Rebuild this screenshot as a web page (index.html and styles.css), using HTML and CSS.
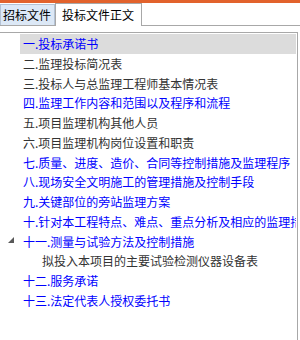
FILE: index.html
```html
<!DOCTYPE html>
<html lang="zh-CN">

<head>
    <meta charset="UTF-8">
    <meta name="viewport" content="width=device-width, initial-scale=1.0">
    <title>投标文件</title>
    <link rel="stylesheet" href="styles.css">
</head>

<body>

    <div class="tabs">
        <span class="tab">招标文件</span>
        <span class="tab active">投标文件正文</span>
    </div>

    <div class="panel">
        <ul class="tree">
            <li class="node link selected">一.投标承诺书</li>
            <li class="node">二.监理投标简况表</li>
            <li class="node">三.投标人与总监理工程师基本情况表</li>
            <li class="node link">四.监理工作内容和范围以及程序和流程</li>
            <li class="node">五.项目监理机构其他人员</li>
            <li class="node">六.项目监理机构岗位设置和职责</li>
            <li class="node link">七.质量、进度、造价、合同等控制措施及监理程序</li>
            <li class="node link">八.现场安全文明施工的管理措施及控制手段</li>
            <li class="node link">九.关键部位的旁站监理方案</li>
            <li class="node link">十.针对本工程特点、难点、重点分析及相应的监理措施</li>
            <li class="node link">
                <svg class="toggle" width="6" height="6" viewBox="0 0 6 6"><polygon points="6,0 6,6 0,6" /></svg>十一.测量与试验方法及控制措施
            </li>
            <li class="node child">拟投入本项目的主要试验检测仪器设备表</li>
            <li class="node link">十二.服务承诺</li>
            <li class="node link">十三.法定代表人授权委托书</li>
        </ul>
    </div>

</body>

</html>
```

FILE: styles.css
```css
body {
    margin: 0;
    background-color: #fff;
    font-family: "Noto Sans CJK SC", "Noto Sans", sans-serif;
    font-size: 12px;
    color: #000;
    overflow: hidden;
}

.tabs {
    display: flex;
    align-items: flex-end;
    height: 22px;
    border-top: 3px solid #e2622c;
    border-bottom: 1px solid #a8a8a8;
}

.tab {
    box-sizing: border-box;
    height: 21px;
    line-height: 19px;
    padding: 0 2px;
    width: 55px;
    white-space: nowrap;
    overflow: hidden;
    background-color: #dce8f6;
    border: 1px solid #b4c2d4;
    border-bottom: none;
}

.tab.active {
    width: 87px;
    height: 23px;
    line-height: 22px;
    padding: 0 6px;
    margin-bottom: -1px;
    background-color: #fff;
    border-color: #a8a8a8;
}

.panel {
    width: 297px;
    height: 320px;
    margin-top: 6px;
    padding-top: 1px;
    border-top: 1px solid #a8a8a8;
    border-right: 1px solid #a8a8a8;
}

.tree {
    list-style: none;
    margin: 0;
    padding: 0;
}

.node {
    position: relative;
    width: 273px;
    height: 19.75px;
    line-height: 19.75px;
    margin-left: 20px;
    padding-left: 3px;
    white-space: nowrap;
    overflow: hidden;
    color: #333;
}

.node.link {
    color: #0000ff;
}

.node.selected {
    background-color: #dcdcdc;
}

.node.child {
    padding-left: 22px;
    width: 254px;
}

.tree li:has(.toggle) {
    overflow: visible;
}

.toggle {
    position: absolute;
    left: -12px;
    top: 5px;
    fill: #595959;
}
```
